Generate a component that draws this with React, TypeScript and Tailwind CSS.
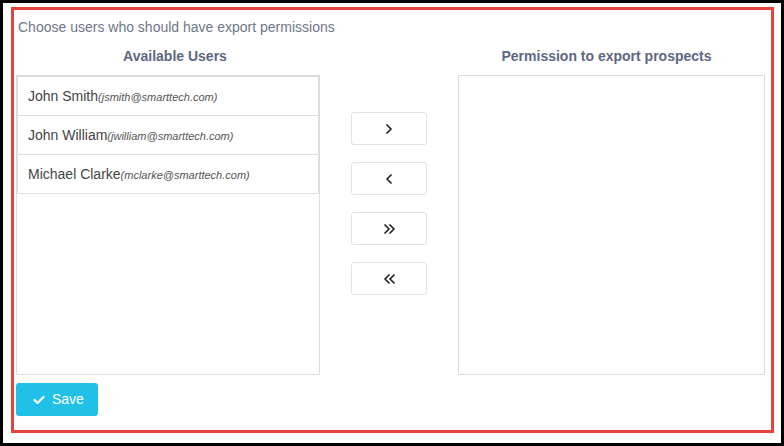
import React from 'react';

const users = [
  { name: 'John Smith', email: 'jsmith@smarttech.com' },
  { name: 'John William', email: 'jwilliam@smarttech.com' },
  { name: 'Michael Clarke', email: 'mclarke@smarttech.com' },
];

const Chevron: React.FC<{ dir: 'right' | 'left'; double?: boolean }> = ({ dir, double }) => {
  const one = dir === 'right' ? 'M1 1 L5 5 L1 9' : 'M5 1 L1 5 L5 9';
  return (
    <svg width={double ? 11 : 6} height={10} viewBox={double ? '0 0 11 10' : '0 0 6 10'} fill="none" stroke="#222" strokeWidth={1.7} strokeLinecap="round" strokeLinejoin="round">
      <path d={one} />
      {double && <path d={one} transform="translate(5 0)" />}
    </svg>
  );
};

const MoveButton: React.FC<{ children: React.ReactNode }> = ({ children }) => (
  <button className="flex h-[33px] w-[76px] items-center justify-center rounded-[3px] border border-[#e3e3e3] bg-white">
    {children}
  </button>
);

const App: React.FC = () => {
  return (
    <div className="h-[446px] w-[784px] bg-black p-[3px] font-['Liberation_Sans',Arial,sans-serif]">
      <div className="h-full bg-white pb-[10px] pl-[8px] pr-[7px] pt-[4px]">
        <div className="h-full border-[3px] border-[#e5433f] px-[2px] pt-[7px]">
          <p className="pl-[2px] text-[14px] leading-[20px] text-[#6e7789]">Choose users who should have export permissions</p>

          <div className="mt-[9px] flex">
            {/* available */}
            <div className="w-[318px]">
              <h3 className="text-center text-[14px] font-bold leading-[20px] text-[#5d6781]">Available Users</h3>
              <div className="mt-[9px] h-[300px] w-[304px] border border-[#dcdcdc]">
                {users.map((u) => (
                  <div key={u.email} className="-mb-px h-[40px] overflow-hidden border border-[#dedede] py-[9px] pl-[10px] text-[14px] leading-[20px] text-[#444]">
                    {u.name}
                    <span className="text-[11px] italic text-[#555]">({u.email})</span>
                  </div>
                ))}
              </div>
            </div>

            {/* move buttons */}
            <div className="flex w-[114px] flex-col gap-[17px] pl-[17px] pt-[66px]">
              <MoveButton>
                <Chevron dir="right" />
              </MoveButton>
              <MoveButton>
                <Chevron dir="left" />
              </MoveButton>
              <MoveButton>
                <Chevron dir="right" double />
              </MoveButton>
              <MoveButton>
                <Chevron dir="left" double />
              </MoveButton>
            </div>

            {/* permitted */}
            <div className="w-[317px]">
              <h3 className="text-center text-[14px] font-bold leading-[20px] text-[#5d6781]">Permission to export prospects</h3>
              <div className="ml-[10px] mt-[9px] h-[300px] w-[307px] border border-[#dcdcdc]" />
            </div>
          </div>

          <button className="mt-[8px] flex h-[33px] w-[82px] items-center gap-[7px] rounded-[3px] bg-[#20c0e7] pl-[17px] text-[14px] text-white">
            <svg width="12" height="10" viewBox="0 0 12 10" fill="none" stroke="white" strokeWidth={2.2} strokeLinecap="round" strokeLinejoin="round">
              <path d="M1.5 5 L4.5 8 L10.5 2" />
            </svg>
            Save
          </button>
        </div>
      </div>
    </div>
  );
};

export default App;
